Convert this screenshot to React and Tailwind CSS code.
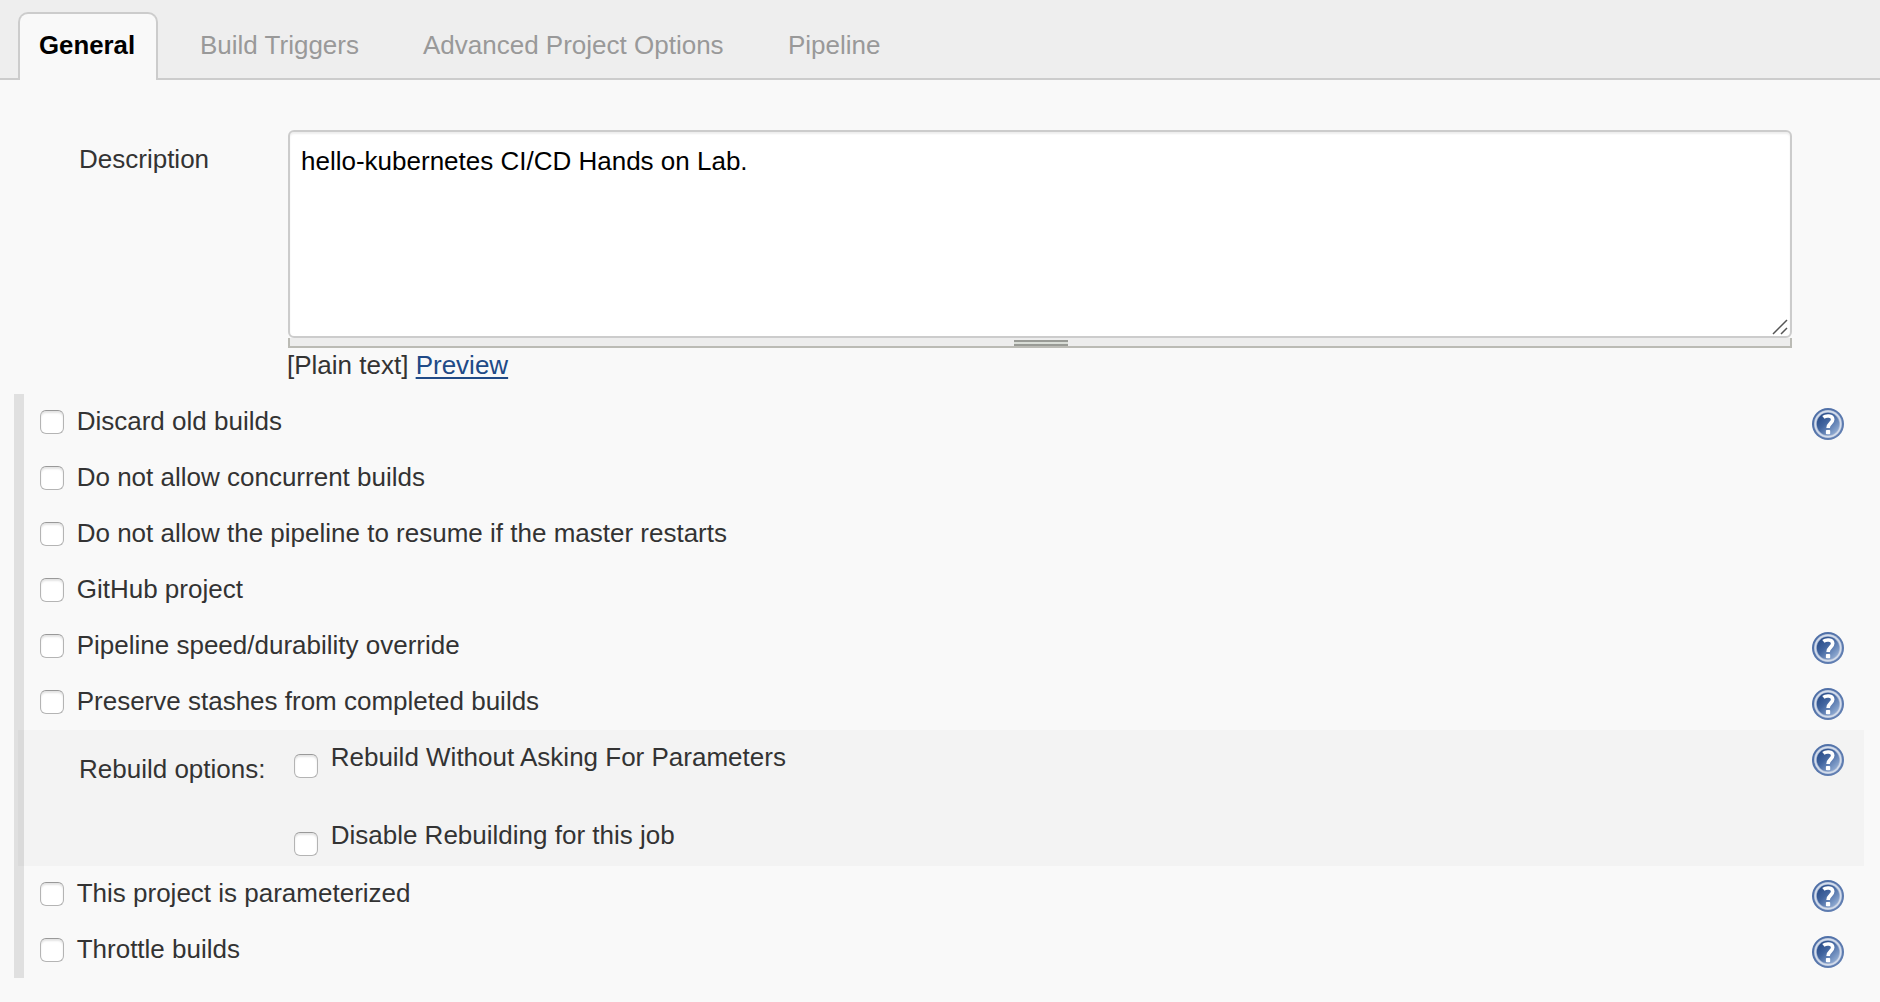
const tabs = [
  { label: "Build Triggers", cls: "ml-[42px] w-[223px]" },
  { label: "Advanced Project Options", cls: "w-[365px]" },
  { label: "Pipeline", cls: "" },
];

const options = [
  { label: "Discard old builds", help: true },
  { label: "Do not allow concurrent builds" },
  { label: "Do not allow the pipeline to resume if the master restarts" },
  { label: "GitHub project" },
  { label: "Pipeline speed/durability override", help: true },
  { label: "Preserve stashes from completed builds", help: true },
];

const moreOptions = [
  { label: "This project is parameterized", help: true },
  { label: "Throttle builds", help: true },
];

function HelpIcon() {
  return (
    <svg className="block h-8 w-8 shrink-0" viewBox="0 0 32 32">
      <defs>
        <linearGradient id="helpFill" x1="0.1" y1="0.15" x2="0.85" y2="0.9">
          <stop offset="0" stopColor="#2a4d89" />
          <stop offset="0.4" stopColor="#42659f" />
          <stop offset="1" stopColor="#8faad2" />
        </linearGradient>
        <linearGradient id="helpRim" x1="0" y1="0" x2="1" y2="1">
          <stop offset="0" stopColor="#4a6ba4" />
          <stop offset="1" stopColor="#6582b4" />
        </linearGradient>
      </defs>
      <circle cx="16" cy="16" r="16" fill="url(#helpRim)" />
      <circle cx="16" cy="16" r="14" fill="#a9b9d6" />
      <circle cx="16" cy="16" r="13.4" fill="#d5deec" />
      <circle cx="16" cy="16" r="12" fill="#a3b4d3" />
      <circle cx="16" cy="16" r="11.2" fill="url(#helpFill)" />
      <path
        d="M11.4 9.4 C13.6 7.5 20.7 6.9 20.7 11.6 C20.7 15 16.1 15.4 16.1 20"
        fill="none"
        stroke="#fff"
        strokeWidth="3.6"
      />
      <rect x="13.9" y="22" width="4.3" height="4.3" rx="0.8" fill="#fff" />
    </svg>
  );
}

function Checkbox({ className = "" }) {
  return (
    <input
      type="checkbox"
      className={`block h-6 w-6 shrink-0 appearance-none rounded-[6px] border-[1.5px] border-[#b4b4b4] border-t-[#999] bg-white shadow-[inset_0_2px_2px_rgba(0,0,0,0.11)] ${className}`}
    />
  );
}

function OptionRow({ label, help }) {
  return (
    <div className="flex h-14 items-start pl-4 pr-9">
      <label className="flex grow items-start">
        <Checkbox className="mt-4" />
        <span className="ml-[12.7px] leading-[54px]">{label}</span>
      </label>
      {help && (
        <div className="mt-3.5">
          <HelpIcon />
        </div>
      )}
    </div>
  );
}

export default function App() {
  return (
    <div className="h-[1002px] w-[1880px] overflow-hidden bg-[#f9f9f9] font-['Liberation_Sans',Arial,sans-serif] text-[26px] whitespace-nowrap text-[#333]">
      <nav className="flex h-20 items-end bg-[linear-gradient(to_top,#ccc_2px,#eee_2px)] pl-[18px]">
        <div className="h-[68px] w-[140px] rounded-t-[10px] border-2 border-b-0 border-[#ccc] bg-[#f9f9f9] pl-[19px] text-[25.8px] leading-[62px] font-bold text-black">
          General
        </div>
        {tabs.map((t) => (
          <div key={t.label} className={`h-[68px] leading-[66px] text-[#999] ${t.cls}`}>
            {t.label}
          </div>
        ))}
      </nav>

      <section className="flex h-[314px] items-start pt-[50px]">
        <label className="w-[288px] pl-[79px] leading-[58px]">Description</label>
        <div className="w-[1504px]">
          <div className="relative h-[208px] rounded-[6px] border-2 border-[#ccc] bg-white pt-[5px] pl-[11px] leading-[48px] text-black shadow-[inset_0_2px_2px_rgba(0,0,0,0.07)]">
            hello-kubernetes CI/CD Hands on Lab.
            <svg className="absolute right-[2px] bottom-[1px] h-4 w-4" viewBox="0 0 16 16" fill="none" stroke="#555" strokeWidth="1.5">
              <path d="M1 15 L15 1 M9 15 L15 9" />
            </svg>
          </div>
          <div className="flex h-[10px] justify-center border-2 border-t-0 border-[#bbbbb5] bg-[#ededed] pt-[2px] pl-[2px]">
            <div className="h-[6px] w-[54px] border-y-2 border-[#999b96] bg-[#d9ddd7]" />
          </div>
          <div className="-ml-px leading-[34px]">
            [Plain text]{" "}
            <a className="text-[#204a87] underline decoration-2 underline-offset-[3px]">Preview</a>
          </div>
        </div>
      </section>

      <section className="ml-[14px] h-[584px] bg-[linear-gradient(to_right,#e0e0e0_10px,transparent_10px)]">
        <div className="pl-[10px]">
          {options.map((o) => (
            <OptionRow key={o.label} {...o} />
          ))}
        </div>
        <div className="mr-4 ml-1 flex h-[136px] items-start bg-black/[0.024] pr-5">
          <div className="w-[276px] pl-[61px] leading-[78px]">Rebuild options:</div>
          <div className="grow">
            {["Rebuild Without Asking For Parameters", "Disable Rebuilding for this job"].map((label) => (
              <label key={label} className="flex h-[78px] items-start">
                <Checkbox className="mt-6" />
                <span className="ml-[12.7px] leading-[54px]">{label}</span>
              </label>
            ))}
          </div>
          <div className="mt-3.5">
            <HelpIcon />
          </div>
        </div>
        <div className="pl-[10px]">
          {moreOptions.map((o) => (
            <OptionRow key={o.label} {...o} />
          ))}
        </div>
      </section>
    </div>
  );
}
